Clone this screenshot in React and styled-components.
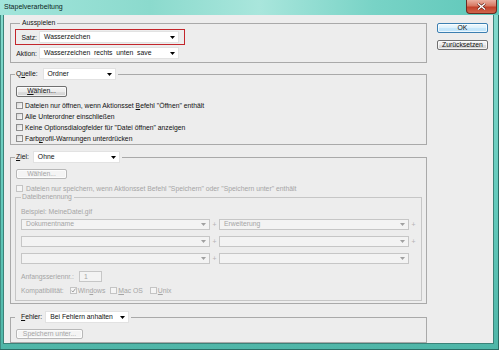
import React from 'react';
import styled, { createGlobalStyle } from 'styled-components';

const GlobalStyle = createGlobalStyle`
  html, body {
    margin: 0;
    padding: 0;
    background: #fff;
  }
  body {
    font-family: "Liberation Sans", Arial, sans-serif;
    font-size: 6.8px;
    color: #111;
  }
  * {
    box-sizing: border-box;
  }
`;

const GREY_TEXT = '#a5a5a5';

const Caret = ({ disabled }) => (
  <svg width="5" height="3" viewBox="0 0 5 3">
    <path d="M0 0h5L2.5 3z" fill={disabled ? '#a0a0a0' : '#000'} />
  </svg>
);

const Tick = () => (
  <svg width="5" height="5" viewBox="0 0 5 5">
    <path d="M0.5 2.6 L1.9 4 L4.5 0.6" stroke="#9a9a9a" strokeWidth="1" fill="none" />
  </svg>
);

const Select = ({ w, h, disabled, children }) => (
  <SelectBox $w={w} $h={h} $disabled={disabled}>
    <span>{children}</span>
    <Caret disabled={disabled} />
  </SelectBox>
);

const Check = ({ disabled, checked }) => (
  <Box $disabled={disabled}>{checked && <Tick />}</Box>
);

const App = () => (
  <>
    <GlobalStyle />
    <Window>
      <TitleBar>
        <Title>Stapelverarbeitung</Title>
        <Close>
          <svg width="9" height="7" viewBox="0 0 9 7">
            <path d="M1 0.5 L8 6.5 M8 0.5 L1 6.5" stroke="#5a1d14" strokeWidth="2.6" />
            <path d="M1 0.5 L8 6.5 M8 0.5 L1 6.5" stroke="#fff" strokeWidth="1.4" />
          </svg>
        </Close>
      </TitleBar>

      <Client>
        <Main>
          <Group $pt={1} $pb={1}>
            <Legend $h={10} $ml={5}>Ausspielen</Legend>
            <FieldRow $hl>
              <FieldLabel>Satz:</FieldLabel>
              <Select w={140}>Wasserzeichen</Select>
            </FieldRow>
            <FieldRow>
              <FieldLabel>Aktion:</FieldLabel>
              <Select w={140}>Wasserzeichen&nbsp; rechts&nbsp; unten&nbsp; save</Select>
            </FieldRow>
          </Group>

          <Group $mt={5} $pt={6}>
            <Legend $h={12} $pl={1} $gap={5}>
              <span>Q<u>u</u>elle:</span>
              <Select w={73}>Ordner</Select>
            </Legend>
            <Button $w={51} $h={11} $ml={1}><span><u>W</u>ählen...</span></Button>
            <CheckRow $mt={3}>
              <Check />
              <span>Dateien nur öffnen, wenn Aktionsset <u>B</u>efehl "Öffnen" enthält</span>
            </CheckRow>
            <CheckRow>
              <Check />
              <span>Alle Unterordner einschließen</span>
            </CheckRow>
            <CheckRow>
              <Check />
              <span>Keine Optionsdialogfelder für "Datei öffnen" anzeigen</span>
            </CheckRow>
            <CheckRow>
              <Check />
              <span>Farb<u>p</u>rofil-Warnungen unterdrücken</span>
            </CheckRow>
          </Group>

          <Group $mt={6} $pt={6} $pb={2}>
            <Legend $h={12} $pl={1} $gap={4}>
              <span><u>Z</u>iel:</span>
              <Select w={87}>Ohne</Select>
            </Legend>
            <Button $w={51} $h={10} $ml={1} $disabled>Wählen...</Button>
            <CheckRow $mt={4} $h={10} $gap={3} $disabled>
              <Check disabled />
              <span>Dateien nur speichern, wenn Aktionsset Befehl "Speichern" oder "Speichern unter" enthält</span>
            </CheckRow>

            <Group $inner $pt={5} $pb={5} $pl={5} $pr={3}>
              <Legend $h={8} $pl={1} $disabled>Dateibenennung</Legend>
              <Line $h={10} $disabled>Beispiel: MeineDatei.gif</Line>
              <Line $h={11} $mt={3}>
                <Select w={189} h={11} disabled>Dokumentname</Select>
                <Plus>+</Plus>
                <Select w={190} h={11} disabled>Erweiterung</Select>
                <Plus>+</Plus>
              </Line>
              <Line $h={11} $mt={6}>
                <Select w={189} h={11} disabled />
                <Plus>+</Plus>
                <Select w={190} h={11} disabled />
                <Plus>+</Plus>
              </Line>
              <Line $h={11} $mt={6}>
                <Select w={189} h={11} disabled />
                <Plus>+</Plus>
                <Select w={190} h={11} disabled />
              </Line>
              <Line $h={11} $mt={7} $gap={5} $disabled>
                <span>Anfangsseriennr.:</span>
                <NumInput>1</NumInput>
              </Line>
              <Line $h={10} $mt={3} $disabled>
                <span>Kompatibilität:</span>
                <Compat $ml={6}>
                  <Check disabled checked />
                  <span>Win<u>d</u>ows</span>
                </Compat>
                <Compat $ml={5}>
                  <Check disabled />
                  <span><u>M</u>ac OS</span>
                </Compat>
                <Compat $ml={7}>
                  <Check disabled />
                  <span><u>U</u>nix</span>
                </Compat>
              </Line>
            </Group>
          </Group>

          <Group $mt={7} $pt={6} $pb={3}>
            <Legend $h={12} $pl={6} $gap={3}>
              <span><u>F</u>ehler:</span>
              <Select w={84}>Bei Fehlern anhalten</Select>
            </Legend>
            <Button $w={67} $h={10} $ml={1} $disabled>Speichern unter...</Button>
          </Group>
        </Main>

        <Side>
          <Button $w={51} $h={10} $default>OK</Button>
          <Button $w={51} $h={10}>Zurücksetzen</Button>
        </Side>
      </Client>
    </Window>
  </>
);

export default App;

const Window = styled.div`
  width: 499px;
  height: 350px;
  display: flex;
  flex-direction: column;
  background: linear-gradient(180deg, #86dbce 0%, #62c9bb 60%, #4fb6a8 100%);
  box-shadow: inset 0 -1px 0 #2b6d65, inset -1px 0 0 #2b6d65, inset 1px 0 0 #3f8c82;
`;

const TitleBar = styled.div`
  height: 15px;
  flex: none;
  display: flex;
  align-items: flex-start;
  justify-content: space-between;
  background: linear-gradient(90deg, #a2e5db 0%, #8bdacd 30%, #a9e6dc 52%, #78d3c6 75%, #5ec7b9 100%);
`;

const Title = styled.span`
  padding-left: 4px;
  line-height: 14px;
  font-size: 7px;
  color: #0d1f1c;
`;

const Close = styled.div`
  width: 31px;
  height: 14px;
  margin-right: 2px;
  display: flex;
  align-items: center;
  justify-content: center;
  border: 1px solid #6b2b22;
  border-top: none;
  border-radius: 0 0 4px 4px;
  background: linear-gradient(#eab0a1, #d77862 45%, #c2412a 55%, #d0664d);
`;

const Client = styled.div`
  flex: 1;
  display: flex;
  gap: 10px;
  margin: 0 5px 6px 3px;
  padding: 3px 5px 0 6px;
  background: #ededed;
  border: 1px solid #3b8379;
  border-top: none;
`;

const Main = styled.div`
  width: 417px;
  display: flex;
  flex-direction: column;
`;

const Side = styled.div`
  width: 51px;
  display: flex;
  flex-direction: column;
  gap: 7px;
  padding-top: 5px;
`;

const Group = styled.fieldset`
  margin: ${p => p.$mt || 0}px 0 0;
  padding: ${p => p.$pt || 0}px ${p => p.$pr ?? 4}px ${p => p.$pb || 0}px ${p => p.$pl ?? 4}px;
  border: 1px solid ${p => (p.$inner ? '#c6c6c6' : '#a9a9a9')};
  min-width: 0;
  display: flex;
  flex-direction: column;
  align-items: flex-start;
  align-self: stretch;
`;

const Legend = styled.legend`
  display: flex;
  align-items: center;
  gap: ${p => p.$gap || 0}px;
  height: ${p => p.$h}px;
  line-height: ${p => p.$h}px;
  margin-left: ${p => p.$ml || 0}px;
  padding: 0 ${p => p.$pr ?? 2}px 0 ${p => p.$pl ?? 2}px;
  color: ${p => (p.$disabled ? GREY_TEXT : '#111')};
  white-space: nowrap;
`;

const FieldRow = styled.div`
  display: grid;
  grid-template-columns: 21px 140px;
  column-gap: 2px;
  align-items: center;
  height: 16px;
  padding: 1px 5px 1px 0;
  border: 1px solid ${p => (p.$hl ? '#c3262c' : 'transparent')};
`;

const FieldLabel = styled.span`
  text-align: right;
  white-space: nowrap;
`;

const SelectBox = styled.div`
  display: flex;
  align-items: center;
  justify-content: space-between;
  flex: none;
  width: ${p => p.$w}px;
  height: ${p => p.$h || 12}px;
  padding: 0 3px 0 4px;
  background: ${p => (p.$disabled ? '#f3f3f3' : '#fff')};
  border: 1px solid ${p => (p.$disabled ? '#c6c6c6' : '#e2e2e2')};
  color: ${p => (p.$disabled ? GREY_TEXT : '#111')};
  white-space: nowrap;
  line-height: 1;
`;

const Button = styled.div`
  display: flex;
  align-items: center;
  justify-content: center;
  flex: none;
  width: ${p => p.$w}px;
  height: ${p => p.$h || 10}px;
  margin-left: ${p => p.$ml || 0}px;
  border: 1px solid ${p => (p.$default ? '#3c7fb1' : p.$disabled ? '#b8b8b8' : '#707070')};
  border-radius: 2px;
  background: ${p =>
    p.$disabled
      ? '#f4f4f4'
      : p.$default
      ? 'linear-gradient(#eef8fd, #dcf0fc 50%, #c6e7fb 51%, #bfe4fb)'
      : 'linear-gradient(#f4f4f4, #ececec 50%, #dedede 51%, #d2d2d2)'};
  box-shadow: inset 0 0 0 1px rgba(255, 255, 255, 0.7);
  color: ${p => (p.$disabled ? GREY_TEXT : '#111')};
  white-space: nowrap;
  line-height: 1;
`;

const CheckRow = styled.div`
  display: flex;
  align-items: center;
  gap: ${p => p.$gap ?? 2}px;
  height: ${p => p.$h || 11}px;
  margin-top: ${p => p.$mt || 0}px;
  margin-left: 1px;
  color: ${p => (p.$disabled ? GREY_TEXT : '#111')};
  white-space: nowrap;
`;

const Box = styled.span`
  width: 7px;
  height: 7px;
  flex: none;
  display: flex;
  align-items: center;
  justify-content: center;
  border: 1px solid ${p => (p.$disabled ? '#c4c4c4' : '#8e8e8e')};
  background: ${p => (p.$disabled ? '#f5f5f5' : 'linear-gradient(135deg, #d9d9d9, #fbfbfb)')};
`;

const Line = styled.div`
  display: flex;
  align-items: center;
  gap: ${p => p.$gap || 0}px;
  height: ${p => p.$h || 10}px;
  margin-top: ${p => p.$mt || 0}px;
  color: ${p => (p.$disabled ? GREY_TEXT : '#111')};
  white-space: nowrap;
`;

const Plus = styled.span`
  width: 9px;
  text-align: center;
  color: #b4b4b4;
`;

const NumInput = styled.div`
  width: 23px;
  height: 11px;
  padding-left: 4px;
  line-height: 9px;
  border: 1px solid #c6c6c6;
  background: #f3f3f3;
`;

const Compat = styled.span`
  display: flex;
  align-items: center;
  gap: 1px;
  margin-left: ${p => p.$ml || 0}px;
`;
